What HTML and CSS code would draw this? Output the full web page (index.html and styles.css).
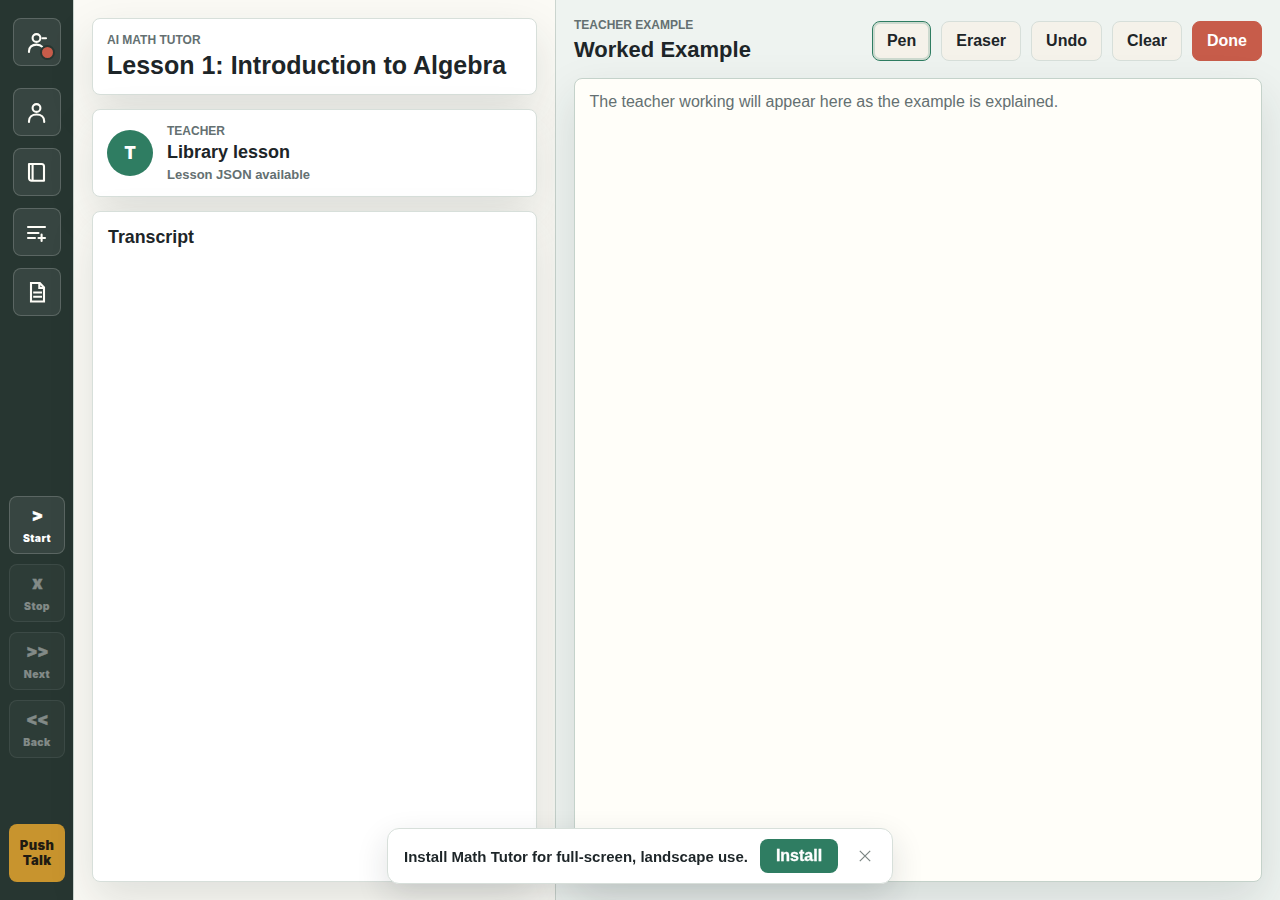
FILE: index.html
```html
<!DOCTYPE html>
<html lang="en">
<head>
    <meta charset="UTF-8">
    <meta name="viewport" content="width=device-width, initial-scale=1.0">
    <title>AI Math Tutor</title>
    <link rel="stylesheet" href="styles.css">
</head>
<body>
    <div class="app">
        <nav class="rail">
            <div class="rail-top">
                <button class="icon-btn account" aria-label="Account">
                    <svg viewBox="0 0 24 24"><circle cx="11.5" cy="8" r="3.9"/><path d="M4 22v-.8c0-4 3-6.6 7.5-6.6 2.5 0 4.5.8 5.8 2.3M17.5 8.2H21"/></svg>
                    <span class="status-dot"></span>
                </button>
                <button class="icon-btn" aria-label="Profile">
                    <svg viewBox="0 0 24 24"><circle cx="11.5" cy="8" r="3.9"/><path d="M4 22v-.8c0-4 3-6.7 7.6-6.7s7.6 2.7 7.6 6.7v.8"/></svg>
                </button>
                <button class="icon-btn" aria-label="Library">
                    <svg viewBox="0 0 24 24"><path d="M4 4h12.5A2.5 2.5 0 0 1 19 6.5V20.7H6.5A2.5 2.5 0 0 1 4 18.2ZM7.6 4v16.5"/></svg>
                </button>
                <button class="icon-btn" aria-label="Add lesson">
                    <svg viewBox="0 0 24 24"><path d="M3 7H20M3 13H13.5M3 18H10M16.6 14.5v6.5M13.5 18H20"/></svg>
                </button>
                <button class="icon-btn" aria-label="Notes">
                    <svg class="page-icon" viewBox="0 0 24 24"><path d="M6 3H14.8L19 7.5V21.5H6ZM14.3 3v5h4.5M8.2 12.5H17M8.2 16.7H17"/></svg>
                </button>
            </div>
            <div class="rail-controls">
                <button class="control"><span class="mark">&gt;</span><span class="name">Start</span></button>
                <button class="control" disabled><span class="mark">x</span><span class="name">Stop</span></button>
                <button class="control" disabled><span class="mark">&gt;&gt;</span><span class="name">Next</span></button>
                <button class="control" disabled><span class="mark">&lt;&lt;</span><span class="name">Back</span></button>
            </div>
            <button class="push-talk">Push Talk</button>
        </nav>

        <section class="lesson-pane">
            <header class="card lesson-head">
                <p class="eyebrow">AI MATH TUTOR</p>
                <h1>Lesson 1: Introduction to Algebra</h1>
            </header>
            <div class="card teacher">
                <div class="avatar">T</div>
                <div>
                    <p class="eyebrow">TEACHER</p>
                    <h2>Library lesson</h2>
                    <p class="teacher-status">Lesson JSON available</p>
                </div>
            </div>
            <div class="card transcript">
                <h2>Transcript</h2>
            </div>
        </section>

        <main class="work-pane">
            <header class="work-head">
                <div>
                    <p class="eyebrow">TEACHER EXAMPLE</p>
                    <h2>Worked Example</h2>
                </div>
                <div class="tools">
                    <button class="tool active">Pen</button>
                    <button class="tool">Eraser</button>
                    <button class="tool">Undo</button>
                    <button class="tool">Clear</button>
                    <button class="tool done">Done</button>
                </div>
            </header>
            <div class="board">The teacher working will appear here as the example is explained.</div>
        </main>
    </div>

    <div class="install-banner">
        <span class="install-text">Install Math Tutor for full-screen, landscape use.</span>
        <button class="install-btn">Install</button>
        <button class="close-btn" aria-label="Dismiss">
            <svg viewBox="0 0 12 12"><path d="M.8.8l10.4 10.4M11.2.8L.8 11.2"/></svg>
        </button>
    </div>
</body>
</html>
```

FILE: styles.css
```css
:root {
    --ink: #1d2528;
    --muted: #647071;
    --line: #d7dfda;
    --green: #2f7d62;
    --red: #c75c4a;
    --gold: #c8942e;
    --shadow: 0 18px 45px rgba(34, 48, 45, 0.13);
}

* {
    box-sizing: border-box;
}

body {
    margin: 0;
    height: 100vh;
    overflow: hidden;
    color: var(--ink);
    background: #fbfaf5;
    font-family: "Liberation Sans", Arial, sans-serif;
}

h1,
h2,
p {
    margin: 0;
}

button {
    font: inherit;
    padding: 0;
    cursor: pointer;
}

.app {
    display: grid;
    grid-template-columns: 74px 482px 1fr;
    height: 100vh;
}

/* left rail */
.rail {
    display: flex;
    flex-direction: column;
    justify-content: space-between;
    align-items: center;
    padding: 18px 0;
    background: #273631;
    border-right: 1px solid #cbd5cf;
}

.rail-top {
    display: grid;
    gap: 12px;
}

.icon-btn {
    display: grid;
    place-items: center;
    width: 48px;
    height: 48px;
    margin-left: 1px;
    color: #fffef8;
    background: rgba(255, 255, 255, 0.08);
    border: 1px solid rgba(255, 255, 255, 0.18);
    border-radius: 8px;
}

.icon-btn svg {
    width: 24px;
    height: 24px;
    fill: none;
    stroke: currentColor;
    stroke-width: 2.1;
    stroke-linecap: round;
    stroke-linejoin: round;
}

.icon-btn .page-icon {
    stroke-linejoin: miter;
    stroke-linecap: butt;
}

.account {
    position: relative;
    margin-bottom: 10px;
}

.status-dot {
    position: absolute;
    right: 5px;
    bottom: 5px;
    width: 15px;
    height: 15px;
    background: var(--red);
    border: 2px solid #273631;
    border-radius: 50%;
}

.rail-controls {
    display: grid;
    gap: 10px;
    margin-top: 114px;
}

.control,
.push-talk {
    width: 56px;
    height: 58px;
    margin-left: 1px;
    border-radius: 8px;
    font-family: "Arial Black", Inter, sans-serif;
    font-weight: 900;
}

.control {
    display: flex;
    flex-direction: column;
    align-items: center;
    color: #fff;
    background: rgba(255, 255, 255, 0.08);
    border: 1px solid rgba(255, 255, 255, 0.18);
}

.control:disabled {
    opacity: 0.42;
}

.mark {
    margin-top: 7px;
    font-size: 17px;
    line-height: 22px;
    letter-spacing: -0.8px;
    -webkit-text-stroke: 0.3px currentColor;
}

.name {
    margin-top: 6px;
    font-size: 10.4px;
    line-height: 14px;
    letter-spacing: 0.4px;
}

.push-talk {
    padding: 0 8px;
    color: #1f1b12;
    background: var(--gold);
    border: 0;
    font-size: 13px;
    line-height: 15px;
    letter-spacing: 0.3px;
}

/* lesson column */
.lesson-pane {
    display: flex;
    flex-direction: column;
    gap: 14px;
    padding: 18px;
    background: #fbfaf5;
    border-right: 1px solid #cbd5cf;
}

.card {
    background: #fff;
    border: 1px solid var(--line);
    border-radius: 8px;
    box-shadow: var(--shadow);
}

.eyebrow {
    color: var(--muted);
    font-size: 12px;
    font-weight: 700;
    line-height: 14px;
}

.lesson-head {
    height: 77px;
    padding: 14px;
}

.lesson-head h1 {
    margin-top: 4px;
    font-size: 25px;
    line-height: 28px;
}

.teacher {
    display: flex;
    align-items: center;
    gap: 14px;
    height: 88px;
    padding: 0 14px;
}

.avatar {
    display: grid;
    place-items: center;
    width: 46px;
    height: 46px;
    color: #fff;
    background: var(--green);
    border-radius: 50%;
    font-family: "Arial Black", Inter, sans-serif;
    font-size: 17px;
    font-weight: 900;
}

.teacher h2,
.transcript h2 {
    font-size: 18px;
    line-height: 20px;
}

.teacher h2 {
    margin-top: 4px;
}

.teacher-status {
    margin-top: 5px;
    color: var(--muted);
    font-size: 13px;
    font-weight: 700;
    line-height: 15px;
}

.transcript {
    flex: 1;
    padding: 15px;
}

.transcript h2 {
    font-size: 17.8px;
}

/* worked example */
.work-pane {
    display: flex;
    flex-direction: column;
    gap: 14px;
    padding: 18px;
    background: #eef3f0;
}

.work-head {
    display: flex;
    justify-content: space-between;
    align-items: center;
    height: 46px;
}

.work-head h2 {
    margin-top: 5px;
    margin-bottom: 1px;
    font-size: 22px;
    line-height: 26px;
}

.tools {
    display: flex;
    gap: 10px;
}

.tool {
    height: 40px;
    padding: 0 14px;
    color: var(--ink);
    background: #f5f2ea;
    border: 1px solid var(--line);
    border-radius: 8px;
    font-size: 16px;
    font-weight: 700;
}

.tool.active {
    border-color: var(--green);
    box-shadow: inset 0 0 0 2px rgba(47, 125, 98, 0.2);
}

.tool.done {
    color: #fff;
    background: var(--red);
    border-color: var(--red);
}

.board {
    flex: 1;
    padding: 14px 14.5px;
    color: var(--muted);
    background: #fffef9;
    border: 1px solid #c4d2ca;
    border-radius: 8px;
    box-shadow: var(--shadow);
    font-size: 16px;
    line-height: 18px;
}

/* install prompt */
.install-banner {
    position: fixed;
    left: 50%;
    bottom: 16px;
    display: flex;
    align-items: center;
    width: 506px;
    height: 56px;
    padding: 0 16px;
    transform: translateX(-50%);
    background: #fff;
    border: 1px solid var(--line);
    border-radius: 12px;
    box-shadow: 0 12px 32px rgba(29, 37, 40, 0.14);
}

.install-text {
    flex: 1;
    font-size: 15px;
    font-weight: 700;
    white-space: nowrap;
}

.install-btn {
    width: 78px;
    height: 34px;
    color: #fff;
    background: var(--green);
    border: 0;
    border-radius: 8px;
    font-weight: 700;
    -webkit-text-stroke: 0.3px currentColor;
}

.close-btn {
    display: grid;
    place-items: center;
    width: 34px;
    height: 34px;
    margin-left: 10px;
    margin-right: -6px;
    background: none;
    border: 0;
}

.close-btn svg {
    width: 12px;
    height: 12px;
    fill: none;
    stroke: #7b8583;
    stroke-width: 1.2;
}
```
